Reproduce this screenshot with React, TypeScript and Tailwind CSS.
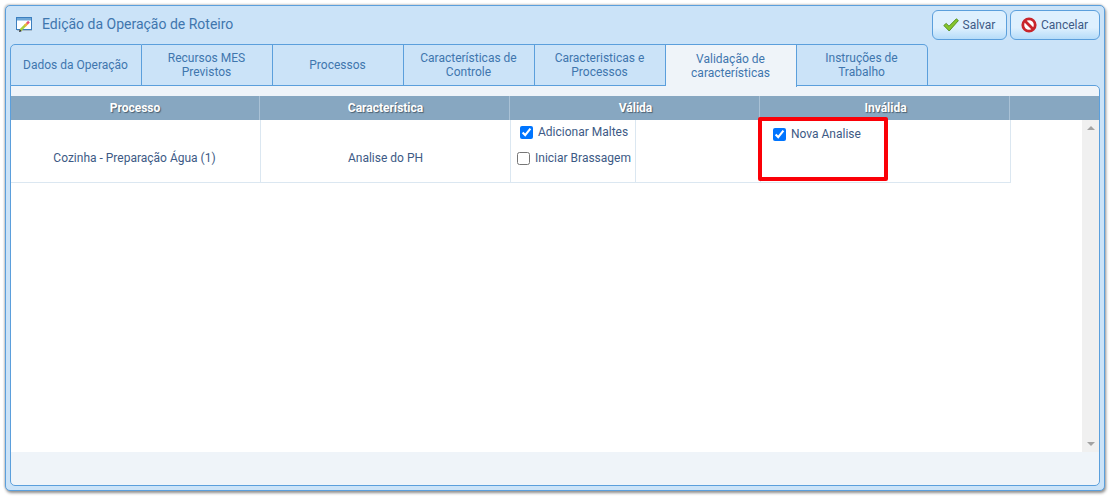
import type { ReactNode } from "react";

const tabs = [
  "Dados da Operação",
  "Recursos MES Previstos",
  "Processos",
  "Características de Controle",
  "Caracteristicas e Processos",
  "Validação de características",
  "Instruções de Trabalho",
];

const headers = ["Processo", "Característica", "Válida", "Inválida"];

function CheckItem({ label, checked }: { label: string; checked?: boolean }) {
  return (
    <label className="flex items-center gap-[5px] text-[12px] leading-[14px] text-[#3d5a85]">
      <input type="checkbox" defaultChecked={checked} className="m-0 h-[13px] w-[13px]" />
      {label}
    </label>
  );
}

function EditIcon() {
  return (
    <svg width="17" height="17" viewBox="0 0 17 17">
      <rect x="0.5" y="1.5" width="15" height="12" fill="#fff" stroke="#3c7fbf" />
      <rect x="1" y="2" width="14" height="2.5" fill="#6fa8d8" />
      <path d="M1 14.5h15" stroke="#a9bccd" />
      <path d="M4.5 14.2 L10 8.7" stroke="#a8cf3a" strokeWidth="2.4" />
      <path d="M8.8 9.9 L11.4 7.3" stroke="#f0b23c" strokeWidth="2.4" />
      <path d="M11 7.7 L13 5.7" stroke="#e8507a" strokeWidth="2.4" />
      <path d="M3 16 L3.8 13.4 L5.6 15.2 Z" fill="#1c1c1c" />
    </svg>
  );
}

function SaveIcon() {
  return (
    <svg width="16" height="14" viewBox="0 0 16 14">
      <path
        d="M0.8 7.5 L3.2 5.4 L6 8.2 L13.4 0.8 L15.4 2.6 L6.2 13 Z"
        fill="#86c52c"
        stroke="#4f8a1c"
        strokeWidth="0.9"
        strokeLinejoin="round"
      />
    </svg>
  );
}

function CancelIcon() {
  return (
    <svg width="16" height="16" viewBox="0 0 16 16">
      <circle cx="8" cy="8" r="6.2" fill="#fff" stroke="#c9252b" strokeWidth="2.8" />
      <path d="M3.8 3.8 L12.2 12.2" stroke="#c9252b" strokeWidth="2.8" />
    </svg>
  );
}

function ActionButton({ icon, label, width }: { icon: ReactNode; label: string; width: string }) {
  return (
    <button
      className={`flex h-[30px] items-center justify-center gap-[4px] rounded-[6px] border border-[#5b9fdc] bg-gradient-to-b from-[#def0fe] from-60% to-[#b5dcf9] pr-[1px] text-[12px] text-[#3d5a85] ${width}`}
    >
      {icon}
      {label}
    </button>
  );
}

export default function App() {
  return (
    <div className="h-[496px] w-[1111px] overflow-hidden bg-white pl-[5px] pt-[5px] font-['Roboto',sans-serif]">
      <div className="flex h-[486px] w-[1100px] flex-col rounded-[5px] border border-[#5b9fdc] bg-[#cbe3f8] px-[4px] pb-[4px] shadow-[1px_2px_3px_#8f8f8f,-1px_-1px_2px_#d0d0d0]">
        <div className="flex h-[38px] shrink-0 items-start justify-between">
          <div className="flex items-center gap-[9px] pl-[6px] pt-[8px] text-[14px] leading-[20px] text-[#3f76ae]">
            <EditIcon />
            Edição da Operação de Roteiro
          </div>
          <div className="flex gap-[3px] pt-[4px]">
            <ActionButton icon={<SaveIcon />} label="Salvar" width="w-[75px]" />
            <ActionButton icon={<CancelIcon />} label="Cancelar" width="w-[90px]" />
          </div>
        </div>

        <div className="flex h-[42px] shrink-0">
          {tabs.map((tab, i) => {
            const active = i === 5;
            return (
              <div
                key={tab}
                className={`relative z-10 flex items-center justify-center border-t border-r border-[#5b9fdc] pl-[11px] pr-[12px] text-center text-[12px] leading-[14px] text-[#3f76ae] ${
                  i === 0 ? "w-[132px] rounded-tl-[5px] border-l" : "w-[131px]"
                } ${i === 6 ? "rounded-tr-[5px]" : ""} ${
                  active ? "-mb-px h-[43px] bg-[#eff4f9] pb-[1px]" : "h-[42px] border-b bg-[#cbe3f8]"
                }`}
              >
                {tab}
              </div>
            );
          })}
        </div>

        <div className="-mt-px flex min-h-0 flex-1 flex-col rounded-[5px] rounded-tl-none border border-[#5b9fdc] bg-[#eff4f9] pt-[10px]">
          <div className="flex h-[24px] shrink-0 bg-[#87a7c1]">
            {headers.map((h, i) => (
              <div
                key={h}
                className={`flex items-center justify-center border-r border-[#a9c1d5] text-[12px] font-bold text-white [text-shadow:1px_1px_1px_#4a5f70] ${
                  i === 0 ? "w-[249px]" : "w-[250px] pl-[2px]"
                }`}
              >
                {h}
              </div>
            ))}
          </div>

          <div className="flex h-[332px] shrink-0 bg-white">
            <div className="relative w-[1071px]">
              <div className="flex h-[63px] w-[1000px] border-b border-[#dbe7f1] text-[12px] text-[#3d5a85]">
                <div className="flex w-[250px] items-center justify-center border-r border-[#dbe7f1] pr-[2px] pt-[13px]">
                  Cozinha - Preparação Água (1)
                </div>
                <div className="flex w-[250px] items-center justify-center border-r border-[#dbe7f1] pt-[13px]">
                  Analise do PH
                </div>
                <div className="flex w-[125px] flex-col gap-[12px] border-r border-[#dbe7f1] pl-[6px] pt-[5px]">
                  <div className="pl-[3px]">
                    <CheckItem label="Adicionar Maltes" checked />
                  </div>
                  <CheckItem label="Iniciar Brassagem" />
                </div>
                <div className="w-[125px] border-r border-[#dbe7f1]" />
                <div className="w-[125px] pl-[12px] pt-[7px]">
                  <CheckItem label="Nova Analise" checked />
                </div>
                <div className="w-[125px] border-r border-[#dbe7f1]" />
              </div>
              <div className="absolute left-[747px] top-[-3px] h-[64px] w-[130px] rounded-[2px] border-[4px] border-[#fb0007]" />
            </div>
            <div className="flex w-[17px] flex-col items-center justify-between bg-[#f0f0f0] py-[6px]">
              <span className="h-0 w-0 border-x-[4px] border-b-[4px] border-x-transparent border-b-[#a3a3a3]" />
              <span className="h-0 w-0 border-x-[4px] border-t-[4px] border-x-transparent border-t-[#a3a3a3]" />
            </div>
          </div>
        </div>
      </div>
    </div>
  );
}
